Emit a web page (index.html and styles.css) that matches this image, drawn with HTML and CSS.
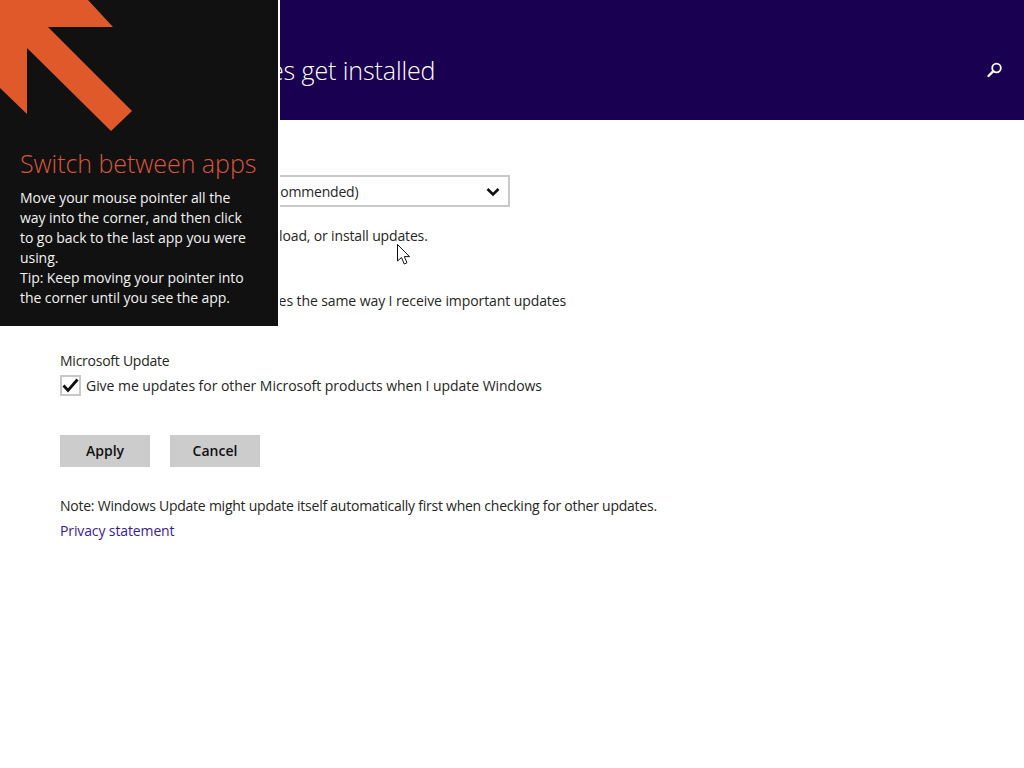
FILE: index.html
```html
<!DOCTYPE html>
<html lang="en">
<head>
<meta charset="utf-8">
<title>Choose how updates get installed</title>
<link rel="stylesheet" href="styles.css">
</head>
<body>
<header class="top">
  <h1 class="title">Choose how updates get installed</h1>
  <svg class="search" width="18" height="18" viewBox="0 0 18 18"><circle cx="10.5" cy="7" r="4.3" fill="none" stroke="#fff" stroke-width="1.8"/><path d="M7.3 10.2 2.5 15" stroke="#fff" stroke-width="2.4" stroke-linecap="round"/></svg>
</header>
<main class="content">
  <section class="group first">
    <div class="label">Important updates</div>
    <div class="select"><span class="select-text">Never check for updates (not recommended)</span>
      <svg width="14" height="10" viewBox="0 0 14 10"><path d="M1.5 2 7 7.5 12.500 2" fill="none" stroke="#111" stroke-width="2.600"/></svg>
    </div>
    <p class="hint">Your PC will never check for, download, or install updates.</p>
  </section>
  <section class="group second">
    <div class="label">Recommended updates</div>
    <div class="check-row"><span class="box"></span><span class="rec-text">Give me recommended updates the same way I receive important updates</span></div>
  </section>
  <section class="group third">
    <div class="label ms-label">Microsoft Update</div>
    <div class="check-row"><span class="box"><svg width="17" height="15" viewBox="0 0 17 15"><path d="M1.500 7.500 6 12.500 15.500 1.500" fill="none" stroke="#111" stroke-width="2.800"/></svg></span><span class="ms-text">Give me updates for other Microsoft products when I update Windows</span></div>
  </section>
  <div class="actions"><button class="btn">Apply</button><button class="btn">Cancel</button></div>
  <p class="note">Note: Windows Update might update itself automatically first when checking for other updates.</p>
  <a class="link" href="#">Privacy statement</a>
</main>
<aside class="tip">
  <svg class="arrow" width="140" height="134" viewBox="0 0 140 134"><polygon points="0,0 88,0 113,27 48,27 132,111 111,131 27,48 27,114 0,88" fill="#e0592b"/></svg>
  <h2 class="tip-title">Switch between apps</h2>
  <p class="tip-text">Move your mouse pointer all the way into the corner, and then click to go back to the last app you were using.<br>Tip: Keep moving your pointer into the corner until you see the app.</p>
</aside>
<svg class="cursor" width="14" height="22" viewBox="0 0 14 22"><path d="M.5.5v16.500l4-3.500 2.700 6.500 2.800-1.200-2.700-6.200h5.200z" fill="#fff" stroke="#111" stroke-width="1"/></svg>
</body>
</html>
```
FILE: styles.css
```css
html, body { margin: 0; height: 100%; }
body { background: #fff; color: #262626; font-family: "Open Sans", sans-serif; font-size: 14px; line-height: 20px; overflow: hidden; position: relative; }
.top { height: 120px; background: #1a0050; display: flex; align-items: center; justify-content: space-between; padding: 0 20px 0 60px; box-sizing: border-box; }
.title { margin: 0; padding-top: 20px; font-size: 25px; font-weight: 300; color: #fff; line-height: 34px; letter-spacing: -0.1px; }
.search { margin-top: 20px; }
.content { padding: 0 60px; }
.label { height: 20px; }
.ms-label { letter-spacing: -0.25px; }
.group.first { padding-top: 26px; }
.select { margin-top: 9px; width: 450px; height: 32px; box-sizing: border-box; border: 2px solid #c9c9c9; display: flex; align-items: center; justify-content: space-between; padding: 1px 8px 0 12px; }
.select-text { letter-spacing: -0.2px; }
.hint { margin: 19px 0 0; letter-spacing: -0.15px; }
.group.second { margin-top: 20px; }
.check-row { display: flex; align-items: center; gap: 5px; margin-top: 4px; height: 21px; }
.rec-text { letter-spacing: -0.09px; }
.ms-text { letter-spacing: -0.045px; }
.box { width: 21px; height: 21px; box-sizing: border-box; border: 2px solid #c9c9c9; display: flex; align-items: center; justify-content: center; flex: none; }
.group.third { margin-top: 40px; }
.actions { display: flex; gap: 20px; margin-top: 39px; }
.btn { width: 90px; height: 32px; border: 0; background: #cccccc; color: #111; font: 600 14px/20px "Open Sans", sans-serif; padding: 0; }
.note { margin: 29px 0 0; letter-spacing: -0.24px; }
.link { display: block; margin-top: 5px; color: #3a1a96; text-decoration: none; letter-spacing: -0.12px; }
.tip { position: absolute; left: 0; top: 0; width: 278px; height: 326px; background: #111111; border-right: 2px solid #fff; overflow: hidden; }
.arrow { display: block; }
.tip-title { margin: 12px 0 0 20px; font-size: 25px; line-height: 34px; font-weight: 300; color: #d9573a; white-space: nowrap; letter-spacing: -0.05px; }
.tip-text { margin: 8px 20px 0; color: #f2f2f2; letter-spacing: -0.06px; }
.cursor { position: absolute; left: 397px; top: 244px; }
```
